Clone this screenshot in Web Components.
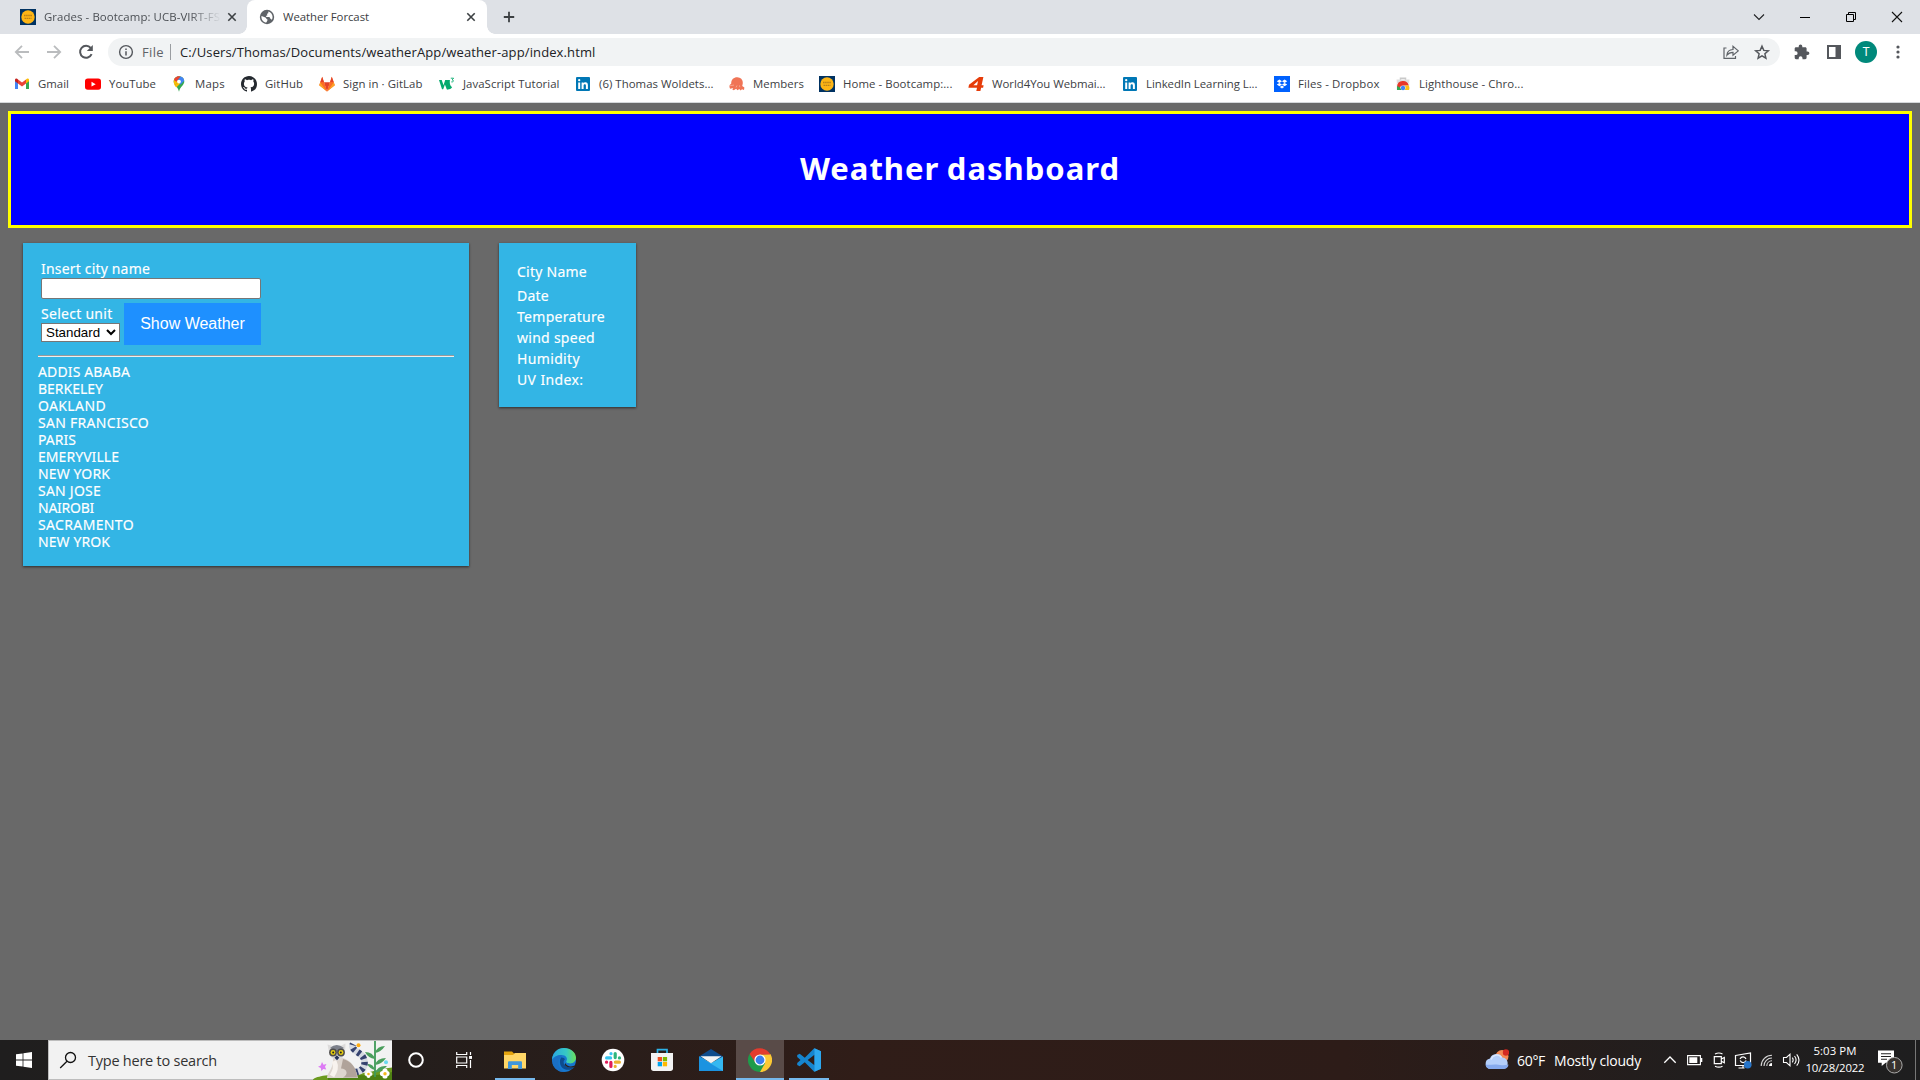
<!DOCTYPE html>
<html lang="en">
<head>
<meta charset="utf-8">
<title>Weather Forcast</title>
<style>
html,body{margin:0;height:100%;overflow:hidden;background:#696969}
body{font-family:"Open Sans","Noto Sans",sans-serif}
</style>
</head>
<body>
<desktop-screen></desktop-screen>
<script>
const define=(name,html,init)=>customElements.define(name,class extends HTMLElement{
  connectedCallback(){
    if(this.shadowRoot)return;
    const r=this.attachShadow({mode:'open'});
    r.innerHTML=typeof html==='function'?html(this):html;
    if(init)init(this,r);
  }
});

/* Text whose letter spacing is tuned so the run has the width in [w] */
define('fit-text','<style>:host{display:inline-block;white-space:pre;flex:none}</style><slot></slot>',el=>{
  const w=parseFloat(el.getAttribute('w'));
  if(!w)return;
  const n=el.textContent.length;
  const now=el.getBoundingClientRect().width;
  el.style.letterSpacing=((w-now)/n).toFixed(3)+'px';
});

const seal='<rect width="16" height="16" fill="#003262"/><circle cx="8" cy="8" r="6.700" fill="#fdb515"/><path d="M4 6.500h8M4.500 9.300h7" stroke="#b9821a" stroke-width="1.300" stroke-dasharray="1.600 .5"/>';
const linkedin='<rect x="1" y="1" width="14" height="14" rx="1" fill="#0077b5"/><path d="M3.200 6.400h2v6.600h-2zM6.600 6.400h1.900v.9c.9-1.400 4.400-1.600 4.400 1.700v4h-2V9.600c0-2-2.300-1.800-2.300 0V13h-2z" fill="#fff"/><circle cx="4.200" cy="4.200" r="1.150" fill="#fff"/>';
const ICONS={
seal:[16,seal],
globe:[16,'<circle cx="8" cy="8" r="7.200" fill="#5f6368"/><path d="M7.300 13.600c-2.800-.3-4.900-2.700-4.900-5.600l.1-1L5.800 8.300c1 .3 1.600.8 1.600 1.700 1.200 0 1.300.9.900 1.700zM9.300 2.500c2.500.6 4.300 2.900 4.300 5.500 0 1-.3 2-.8 2.800L11.200 9.600c0-1.200-.6-1.700-1.700-1.700H7.200c-.3-1.100.2-1.600 1.300-1.700-.8-.9-.6-1.700.8-1.900z" fill="#fff"/>'],
close:[16,'<path d="M4.300 4.300l7.400 7.400M11.700 4.300l-7.400 7.400" stroke="#3c4043" stroke-width="1.600"/>'],
plus:[16,'<path d="M8 2.800v10.400M2.800 8h10.400" stroke="#3c4043" stroke-width="1.800"/>'],
back:[18,'<path d="M16 9H3M9 2.800L2.800 9 9 15.200" fill="none" stroke="#babcbe" stroke-width="1.800"/>'],
fwd:[18,'<path d="M2 9h13M9 2.800L15.200 9 9 15.200" fill="none" stroke="#babcbe" stroke-width="1.800"/>'],
reload:[18,'<path d="M14.600 11.200A6 6 0 1 1 13.700 4.900" fill="none" stroke="#54575c" stroke-width="2"/><path d="M15.800 2v6h-6z" fill="#54575c"/>'],
info:[16,'<circle cx="8" cy="8" r="6.400" fill="none" stroke="#54575c" stroke-width="1.400"/><path d="M8 7.200v4.200M8 4.500v1.600" stroke="#54575c" stroke-width="1.500"/>'],
gmail:[16,'<path d="M1 4v9h3V6.500z" fill="#4285f4"/><path d="M12 6.500V13h3V4z" fill="#34a853"/><path d="M12 3.400V7.500l3-2.300V4c0-1.500-1.700-2.100-3-.6z" fill="#fbbc04"/><path d="M1 4v1.200l3 2.300V3.400C2.700 1.900 1 2.500 1 4z" fill="#c5221f"/><path d="M4 3.400l4 3.100 4-3.100v4.100l-4 3.100-4-3.100z" fill="#ea4335"/>'],
youtube:[16,'<rect y="2.500" width="16" height="11.300" rx="2.800" fill="#f00"/><path d="M6.500 5.700v4.900L10.700 8.150z" fill="#fff"/>'],
maps:[16,'<path d="M8 .3C4.900.3 2.700 2.700 2.700 5.600c0 3.500 4 5 5.300 10.100 1.300-5.100 5.300-6.600 5.300-10.100C13.300 2.700 11.100.3 8 .3z" fill="#34a853"/><path d="M3.700 9.500C3 8.300 2.700 7 2.700 5.600c0-1.300.4-2.500 1.200-3.400L7 4.500 7 6z" fill="#fbbc04"/><path d="M3.700 9.500L11 1.200 13 4 5.200 11.500z" fill="#fbbc04"/><path d="M3.900 2.200C5 .9 6.300.3 8 .3L9.600.6 5.400 5.800 2.900 4z" fill="#ea4335"/><path d="M9.600.6C11.700 1.100 13 2.600 13.200 4.700L9.500 8.500 6.300 4.700z" fill="#4285f4"/><circle cx="8" cy="5.600" r="1.900" fill="#fff"/>'],
github:[16,'<path fill="#24292f" d="M8 0C3.580 0 0 3.580 0 8c0 3.540 2.290 6.530 5.470 7.590.4.070.55-.17.55-.38 0-.19-.01-.82-.01-1.490-2.010.37-2.530-.49-2.690-.94-.09-.23-.48-.94-.82-1.130-.28-.15-.68-.52-.01-.53.63-.01 1.080.58 1.230.82.72 1.210 1.870.87 2.330.66.07-.52.28-.87.51-1.070-1.780-.2-3.640-.89-3.640-3.950 0-.87.31-1.590.82-2.150-.08-.2-.36-1.020.08-2.120 0 0 .67-.21 2.200.82.64-.18 1.320-.27 2-.27s1.360.09 2 .27c1.530-1.040 2.200-.82 2.200-.82.44 1.100.16 1.920.08 2.120.51.56.82 1.270.82 2.150 0 3.070-1.870 3.750-3.650 3.950.29.25.54.73.54 1.480 0 1.070-.01 1.930-.01 2.200 0 .21.15.46.55.38A8.010 8.010 0 0 0 16 8c0-4.420-3.580-8-8-8z"/>'],
gitlab:[16,'<path d="M3.200.8L.2 9.200 8 15.500z" fill="#fc6d26"/><path d="M12.800.8l3 8.400L8 15.500z" fill="#fc6d26"/><path d="M3.200.8L5 6.300H1.300zM12.800.8L11 6.300h3.700z" fill="#e24329"/><path d="M5 6.300h6L8 15.500z" fill="#e24329"/><path d="M1.300 6.300L.2 9.200 8 15.500zM14.700 6.300l1.100 2.900L8 15.500z" fill="#fca326"/><path d="M1.300 6.300H5L8 15.500zM14.700 6.300H11L8 15.500z" fill="#fc6d26"/>'],
w3:[16,'<path d="M0 4h2.700l1.800 5.200L6.200 4h2.600l1 3L8.900 13.200H7.800L5.900 8.500 4.200 13.200H3z" fill="#04aa6d"/><path d="M8.800 4h2.100c-.3 2.500-.3 5.500 2.200 7.200-1.200 2-4 2.600-5.300 2z" fill="#04aa6d"/><path d="M11.800 2.200h2.800l-1.400 1.700c1.800 0 1.600 2.600-.9 2" fill="none" stroke="#04aa6d" stroke-width=".9"/>'],
linkedin:[16,linkedin],
members:[16,'<path d="M2.200 7.800C2 3.600 4.800 1.200 8.300 1.300c3.700.1 6 3 5.400 6.600l-.5 2 2.200 1.600-.4 2.400-2-.7-1.400 1.300-1.300-1.400-1.800 1.200-1.400-1.500-2.300 1.500-1.500-.9 1-1.500-3.200.9C-.2 10.500.6 8.400 2.200 7.800z" fill="#f07456"/><path d="M1 9.700l4-.6M7 11.500l1-2M10.800 11.200l-.3-1.800" stroke="#f9b09b" stroke-width=".8"/>'],
four:[16,'<path d="M11.200.9h4.200l-1.800 8.300H15.600l-.5 2.500h-2l-.7 3.300H8.300l.7-3.300H.4l.6-2.900zM10 5L5.400 9.200h3.700z" fill="#e63c0a" fill-rule="evenodd"/>'],
dropbox:[16,'<rect width="16" height="16" fill="#0061fe"/><path d="M5.400 3.500L2.800 5.200l2.600 1.700L8 5.200zM10.600 3.500L8 5.200l2.600 1.700 2.600-1.700zM5.400 6.900L2.800 8.600l2.600 1.700L8 8.600zM10.600 6.900L8 8.600l2.600 1.700 2.600-1.700zM8 9.600l-2.200 1.500L8 12.600l2.200-1.500z" fill="#fff"/>'],
store2:[16,'<path d="M5.500 4V2.200h5V4" fill="none" stroke="#c9c9c9" stroke-width="1.500"/><path d="M1.500 3.600h13L14 8H2z" fill="#dedede"/><path d="M1.500 7h13v7h-13z" fill="#f1f1f1"/><path d="M2 10.500A6 6 0 0 1 13.800 9.500H8a3 3 0 0 0-3 3z" fill="#e8372a"/><path d="M2 10L5 11.500 6.500 14H2z" fill="#34a853"/><path d="M10 9.500h3.800a6 6 0 0 1 .2 4.500H9.500a3 3 0 0 0 .5-4z" fill="#fbc116"/><circle cx="8" cy="12" r="2.200" fill="#4285f4"/>'],
chev:[16,'<path d="M3 5.500l5 5 5-5" fill="none" stroke="#202124" stroke-width="1.100"/>'],
min:[16,'<path d="M3 8.500h10" stroke="#000" stroke-width="1"/>'],
restore:[16,'<path d="M3.500 5.500h7v7h-7zM5.500 5.500v-2h7v7h-2" fill="none" stroke="#000" stroke-width="1"/>'],
wclose:[16,'<path d="M3 3l10 10M13 3L3 13" stroke="#111" stroke-width="1.100"/>'],
share:[16,'<path d="M3.500 4H1v10.400h11.500V12" fill="none" stroke="#5f6368" stroke-width="1.200"/><path d="M3.900 11.200C4.200 7.300 6.500 5.600 10 5.500V2.300l5.300 4.600L10 11.300V8.300C7.300 8.300 5.500 9 3.900 11.200z" fill="none" stroke="#5f6368" stroke-width="1.200"/>'],
star:[18,'<path d="M9 3.200l1.800 4.200 4.500.4-3.400 3 1 4.400L9 12.900l-3.900 2.300 1-4.400-3.400-3 4.500-.4z" fill="none" stroke="#54575c" stroke-width="1.500"/>'],
puzzle:[16,'<path d="M13.600 7.400h-1V4.600c0-.8-.6-1.400-1.400-1.400H8.300v-1a1.800 1.800 0 0 0-3.600 0v1H2C1.200 3.200.7 3.800.7 4.600v2.700h1a1.900 1.900 0 0 1 0 3.800h-1v2.700c0 .8.6 1.400 1.300 1.400h2.700v-1a1.900 1.900 0 0 1 3.800 0v1h2.700c.8 0 1.400-.6 1.400-1.400V11h1a1.800 1.800 0 0 0 0-3.600z" fill="#54575c"/>'],
panel:[16,'<path d="M2 2h12v12H2z" fill="#fff" stroke="#54575c" stroke-width="2"/><path d="M9.500 2H14v12H9.500z" fill="#54575c"/>'],
dots:[16,'<g fill="#54575c"><circle cx="8" cy="3" r="1.600"/><circle cx="8" cy="8" r="1.600"/><circle cx="8" cy="13" r="1.600"/></g>'],
win:[16,'<path d="M0 2.300L6.600 1.400V7.600H0zM7.400 1.300L16 .1v7.500H7.400zM0 8.400h6.600v6.200L0 13.700zM7.400 8.400H16v7.500l-8.600-1.200z" fill="#fff"/>'],
find:[18,'<circle cx="11.500" cy="6.500" r="5" fill="none" stroke="#111" stroke-width="1.300"/><path d="M8 10.300L1.200 17" stroke="#111" stroke-width="1.300"/>'],
cortana:[18,'<circle cx="9" cy="9" r="6.800" fill="none" stroke="#fff" stroke-width="2"/>'],
tview:[18,'<path d="M1.700 1v2.500h10V1M1.700 17v-2.500h10V17M1.700 6h10v6h-10zM15.500 1v3M15.500 9v8" fill="none" stroke="#fff" stroke-width="1.200"/><path d="M14.100 5h2.900v2.900h-2.900z" fill="#fff"/>'],
folder:[24,'<path d="M1 3.500h8l2 2h11V20H1z" fill="#e5a50f"/><path d="M1 7h9l2-2h11v15.500H1z" fill="#ffd767"/><path d="M5 21v-6.500c0-.8.5-1.300 1.300-1.300h11.400c.8 0 1.300.5 1.300 1.300V21h-3.800v-4H8.800v4z" fill="#3f97dc"/>'],
edge:[24,'<defs><linearGradient id="g1" x1="0" x2="1"><stop offset="0" stop-color="#2aa6e0"/><stop offset=".6" stop-color="#36c9c4"/><stop offset="1" stop-color="#6be05a"/></linearGradient></defs><circle cx="12" cy="12" r="12" fill="#1678cf"/><path d="M0 11.500C.6 4.800 5.500 0 12 0c7 0 12 4.600 12 9.800 0 3.500-2.600 5.600-5.800 5.600-2.900 0-4.600-1.100-3.800-2.400 1.800-3-1-6-4.600-6C5 7 1.500 8.800 0 11.500z" fill="url(#g1)"/><path d="M9.500 9C5 11 5 21 13 23.900 8 24.500 2.500 21.500.7 16 0 10 5 7 9.800 7z" fill="#1a6fc4"/><path d="M9.300 9.500c-3 3.800-1 11.200 5 12.200 3.200.5 6.300-.4 8.400-3-3.200 1.500-7.700 1.200-10-1.600-1.700-2.200-1.300-4.500.2-5.800-.5-1.200-1.900-2-3.600-1.800z" fill="#0d4b8f"/><path d="M12.700 17.100c2.300 2.800 6.800 3.100 10 1.600.6-.5 1-1 .5-1.100-4.100 1.500-8.700 1-9.800-2.600z" fill="#2c211f"/>'],
slack:[24,'<circle cx="12" cy="12" r="11.300" fill="#fff"/><g stroke-width="3.200" stroke-linecap="round"><path d="M5.600 9.900h4M10 5.600v.1" stroke="#36c5f0"/><path d="M14.200 5.600v4M18.500 9.900h-.1" stroke="#2eb67d"/><path d="M18.400 14.200h-4M14.200 18.500v-.1" stroke="#ecb22e"/><path d="M9.900 18.400v-4M5.500 14.200h.1" stroke="#e01e5a"/></g>'],
store:[24,'<path d="M7.500 6V1.700h9.500V6" fill="none" stroke="#2db3e8" stroke-width="1.700"/><path d="M1 5h22v15.500c0 1.600-1 2.500-2.500 2.500h-17C2 23 1 22 1 20.500z" fill="#f3f3f3"/><path d="M7.700 9h4.300v4.300H7.700z" fill="#f25022"/><path d="M12.800 9h4.300v4.300h-4.300z" fill="#7fba00"/><path d="M7.700 14h4.300v4.300H7.700z" fill="#00a4ef"/><path d="M12.800 14h4.300v4.300h-4.300z" fill="#ffb900"/>'],
mail:[24,'<path d="M0 8.500L12 1l12 7.500V12H0z" fill="#0f4c8c"/><path d="M0 8.500L12 15l12-6.500V23H0z" fill="#35b8f1"/><path d="M0 8.500L24 23H0z" fill="#1b93e0"/><path d="M1.500 8.300h21L12 15.200z" fill="#f4f4f4"/>'],
chrome:[24,'<path d="M22.400 6A12 12 0 0 1 12 24L6 12 12 6.500z" fill="#fcc934"/><path d="M1.600 6A12 12 0 0 0 12 24l5.200-9-5.200-3z" fill="#1e9b4b"/><path d="M1.600 6A12 12 0 0 1 22.400 6.500H12L7 14z" fill="#e33b2e"/><circle cx="12" cy="12" r="5.600" fill="#fff"/><circle cx="12" cy="12" r="4.400" fill="#3b7ded"/>'],
vscode:[24,'<path d="M17.200.3L24 3.200v17.600l-6.800 2.900L7.800 14.300 2.700 18.200.2 17V15L3.500 12 .2 9V7l2.500-1.200 5.100 3.900zM17.500 6.800L10.700 12l6.800 5.200z" fill="#1685cf" fill-rule="evenodd"/><path d="M17.500.3L24 3.200v17.600l-6.500 2.900z" fill="#2da8ef"/>'],
weather:[24,'<circle cx="17" cy="8.500" r="6.500" fill="#f58a55"/><circle cx="21" cy="4.500" r="3.200" fill="#d32a22"/><path d="M5.500 21a5.300 5.300 0 0 1-.5-10.500A7 7 0 0 1 17.500 9.500 5.900 5.900 0 0 1 18.500 21z" fill="#b4cffb"/><path d="M5.500 21a5.300 5.300 0 0 1-5-4.500c4 1 7-.5 11 0s7 1.500 12 0c-.3 2.800-2 4.500-5 4.500z" fill="#86aaee"/><path d="M6 11.500c2-5 8-6 10.500-2" fill="none" stroke="#dbe8fd" stroke-width="1.500"/>'],
up:[16,'<path d="M2.300 10.700L8 5l5.700 5.700" fill="none" stroke="#fff" stroke-width="1.300"/>'],
batt:[16,'<path d="M.6 3.600h12.800v9H.6z" fill="none" stroke="#fff" stroke-width="1.100"/><path d="M2.300 5.300h8v5.600h-8zM14 6h1.300v4H14z" fill="#fff"/>'],
cam:[16,'<path d="M3.300 4.600h7v7h-7zM10.300 7l3-1.500v5.300l-3-1.600M4 2q4-2 7.500 0M4 14.200q4 2 7.500 0" fill="none" stroke="#fff" stroke-width="1.200"/>'],
sync:[18,'<path d="M1.500 4.500l15-2.500v12.500h-15zM9 15v2M4.500 17h6" fill="none" stroke="#fff" stroke-width="1.200"/><path d="M6 8c1.500-3 5-2.500 6 0M12.200 9.500c-1.500 3-5 2.500-6 0" fill="none" stroke="#fff" stroke-width="1.200"/><circle cx="13.700" cy="13.700" r="3.800" fill="#2775c9"/>'],
wifi:[16,'<path d="M2.200 14C2.200 8 7 3.200 13 3.200M5 14c0-4.500 3.500-8 8-8M7.800 14c0-3 2.300-5.200 5.200-5.200" fill="none" stroke="#d8d8d8" stroke-width="1.100"/><path d="M10 14c0-1.900 1.200-3 3-3v3z" fill="#fff"/>'],
vol:[18,'<path d="M1.500 6.500h3L8 3.200v11.600l-3.500-3.300h-3zM10.300 6.700q1.700 2.300 0 4.600M12.500 5q3.200 4 0 8M14.700 3.300q4.600 5.700 0 11.400" fill="none" stroke="#fff" stroke-width="1.100"/>'],
notif:[28,'<path d="M1 2.500h16v12.200H8.600L4.700 18v-3.300H1z" fill="#fff"/><path d="M4 5.700h10M4 8.500h10M4 11.300h6" stroke="#222" stroke-width="1.100"/><circle cx="17.300" cy="17.200" r="7.800" fill="#37322f" stroke="#aaa" stroke-width="1"/>'],
lemur:[0,'<path d="M0 39c0-3 14-6 32-5.500 18 .6 32-5 47-7V39z" fill="#6b9a1f"/><path d="M15 35c20-4 40 3 64-4v8H15z" fill="#4d8012"/><path d="M62 36V0" stroke="#3f9a58" stroke-width="1.800"/><path d="M62 29q-5-1-8-6 6-1 8 6zM62 24q7-1 11-7-9 0-11 7zM62 18q-7-1-10-7 8 0 10 7zM62 12q6-1 10-7-8 0-10 7zM62 32q8-2 12-7-9-1-12 7z" fill="#4a9e5c"/><path d="M42 31c8 0 12-8 8-15-3-5-13-7-10-13" fill="none" stroke="#d5d9e1" stroke-width="6.500"/><path d="M42 31c8 0 12-8 8-15-3-5-13-7-10-13" fill="none" stroke="#35426f" stroke-width="6.500" stroke-dasharray="3 3.200"/><path d="M20 17c9-3 22 2 25 20H14c0-6 7-9 6-20z" fill="#ddd5ce"/><path d="M30 18c8 2 14 9 14 18.500H30c6-3 4-9-2-9z" fill="#b0a39a"/><path d="M21 20c3 6 1 10-2 15" fill="none" stroke="#f8f3ee" stroke-width="5"/><path d="M14.500 3.500l5 1.500h8l5-2.500-.3 6.500-2.200 7-5.500 4-6.500-4-2.200-6z" fill="#dcdbdb"/><path d="M17 7q6.500-6 14 0L24.300 11z" fill="#7c808b"/><circle cx="20" cy="11.500" r="3.900" fill="#4d4c4b"/><circle cx="28" cy="11.500" r="3.900" fill="#4d4c4b"/><circle cx="20" cy="11.500" r="2.400" fill="#e8cf10"/><circle cx="28" cy="11.500" r="2.400" fill="#e8cf10"/><circle cx="20.200" cy="11.500" r="1" fill="#222"/><circle cx="27.800" cy="11.500" r="1" fill="#222"/><path d="M21.500 16.700l2.300-2.500 2.500 2.500-2.300 2.500z" fill="#26345a"/><path d="M9 21l1.500 2.700 3-.7-1.500 2.800 1.300 2.700-3-.6-2 2-.5-3-2.800-1.200 2.700-1.300z" fill="#dd7bf5"/><circle cx="45.500" cy="4.300" r="2" fill="#ffac12"/><circle cx="73" cy="21.300" r="2" fill="#6bd8ee"/><g fill="#fff"><circle cx="53.500" cy="33" r="2"/><circle cx="57.500" cy="33" r="2"/><circle cx="55.500" cy="30.800" r="2"/><circle cx="55.500" cy="35" r="2"/><circle cx="69.500" cy="32.500" r="2.600"/><circle cx="74" cy="32.500" r="2.600"/><circle cx="72" cy="30" r="2.600"/><circle cx="72" cy="35" r="2.600"/></g><circle cx="55.500" cy="33" r="1.300" fill="#f4b81e"/><circle cx="72" cy="32.700" r="1.700" fill="#f4b81e"/>']
};

define('ui-icon',el=>{
  const [s,body]=ICONS[el.getAttribute('name')];
  const w=s||79,h=s||39;
  return `<style>:host{display:block;flex:none;width:${w}px;height:${h}px}svg{display:block;width:100%;height:100%}</style><svg viewBox="0 0 ${w} ${h}">${body}</svg>`;
});

/* Fixed-width cell that centres its content */
define('icon-cell',el=>`<style>:host{display:flex;flex:none;align-items:center;justify-content:center;width:${el.getAttribute('w')}px;height:100%}</style><slot></slot>`);

define('browser-tab',el=>{
  const on=el.hasAttribute('active');
  return `<style>
  :host{display:flex;flex:none;align-items:center;box-sizing:border-box;height:34px;font-size:11.400px;color:${on?'#3c4043':'#4b4f54'};
  ${on?'position:relative;width:240px;padding:0 8px 0 12px;background:#fff;border-radius:8px 8px 0 0':'width:247px;padding:0 7px 0 20px'}}
  .t{flex:1;margin:-2px 0 0 8px;overflow:hidden;white-space:nowrap;${on?'':'-webkit-mask:linear-gradient(90deg,#000 145px,transparent 177px)'}}
  ${on?`:host::before,:host::after{content:"";position:absolute;bottom:0;width:8px;height:8px}
  :host::before{left:-8px;background:radial-gradient(circle at 0 0,transparent 7.500px,#fff 8px)}
  :host::after{right:-8px;background:radial-gradient(circle at 100% 0,transparent 7.500px,#fff 8px)}`:''}
  </style><ui-icon name="${el.getAttribute('icon')}"></ui-icon><div class="t"><slot></slot></div><ui-icon name="close"></ui-icon>`;
});

define('book-mark',el=>`<style>:host{display:flex;flex:none;align-items:center;gap:8px;width:${el.getAttribute('w')}px;font-size:11.400px;color:#3c4043}::slotted(fit-text){margin-top:-2px}</style>
<ui-icon name="${el.getAttribute('icon')}"></ui-icon><slot></slot>`);

define('browser-chrome',()=>`<style>
:host{display:flex;flex-direction:column;height:103px;background:#fff;box-sizing:border-box;border-bottom:1px solid #d5d8db}
.tabs{display:flex;align-items:center;height:34px;background:#dee1e6}
.sp{flex:1}
.bar{display:flex;align-items:center;height:36px;padding:0 6px}
.omni{display:flex;align-items:center;flex:none;width:1672px;height:28px;box-sizing:border-box;padding:0 2px 0 10px;margin-left:6px;border-radius:14px;background:#f1f3f4;font-size:13px;color:#202124}
.file{color:#5f6368;margin-left:8px}
.sep{width:1px;height:16px;background:#9a9da1;margin:0 9px 0 6px}
.av{width:22px;height:22px;border-radius:50%;background:#00897b;color:#fff;font:12px Roboto,sans-serif;display:flex;align-items:center;justify-content:center}
.marks{display:flex;align-items:center;height:28px;padding-left:14px}
</style>
<div class="tabs">
<browser-tab icon="seal"><fit-text w="182">Grades - Bootcamp: UCB-VIRT-FSF</fit-text></browser-tab>
<browser-tab active icon="globe"><fit-text w="86">Weather Forcast</fit-text></browser-tab>
<icon-cell w="44"><ui-icon name="plus"></ui-icon></icon-cell><div class="sp"></div>
<icon-cell w="46"><ui-icon name="chev"></ui-icon></icon-cell><icon-cell w="46"><ui-icon name="min"></ui-icon></icon-cell><icon-cell w="46"><ui-icon name="restore"></ui-icon></icon-cell><icon-cell w="46"><ui-icon name="wclose"></ui-icon></icon-cell>
</div>
<div class="bar">
<icon-cell w="32"><ui-icon name="back"></ui-icon></icon-cell><icon-cell w="32"><ui-icon name="fwd"></ui-icon></icon-cell><icon-cell w="32"><ui-icon name="reload"></ui-icon></icon-cell>
<div class="omni"><ui-icon name="info"></ui-icon><fit-text class="file" w="22">File</fit-text><div class="sep"></div><fit-text w="415.500">C:/Users/Thomas/Documents/weatherApp/weather-app/index.html</fit-text><div class="sp"></div>
<icon-cell w="31"><ui-icon name="share"></ui-icon></icon-cell><icon-cell w="32"><ui-icon name="star"></ui-icon></icon-cell></div>
<div class="sp"></div>
<icon-cell w="32"><ui-icon name="puzzle"></ui-icon></icon-cell><icon-cell w="32"><ui-icon name="panel"></ui-icon></icon-cell><icon-cell w="32"><div class="av">T</div></icon-cell><icon-cell w="32"><ui-icon name="dots"></ui-icon></icon-cell>
</div>
<div class="marks">${[['gmail','Gmail',31,71],['youtube','YouTube',47,86],['maps','Maps',30,70],['github','GitHub',38,78],['gitlab','Sign in · GitLab',79.5,120],['w3','JavaScript Tutorial',96.5,136],['linkedin','(6) Thomas Woldets...',114.5,154],['members','Members',51,90],['seal','Home - Bootcamp:...',109.5,149],['four','World4You Webmai...',113.5,154],['linkedin','LinkedIn Learning L...',111.5,152],['dropbox','Files - Dropbox',81.5,121],['store2','Lighthouse - Chro...',104.5,150]].map(([i,t,w,p])=>`<book-mark icon="${i}" w="${p}"><fit-text w="${w}">${t}</fit-text></book-mark>`).join('')}</div>`);

define('page-banner',`<style>:host{display:flex;justify-content:center;box-sizing:border-box;height:117px;margin:8px 8px 0;border:3px solid #ff0;background:#00f;color:#fff}
h1{margin:32px 0 0;font:bold 31px/44px "Noto Sans",sans-serif;word-spacing:-1.500px}</style><h1><slot></slot></h1>`);

define('info-card',`<style>:host{display:block;flex:none;box-sizing:border-box;background:#33b5e5;color:#fff;box-shadow:0 1px 3px rgba(0,0,0,.22),0 1px 2px rgba(0,0,0,.4);font:14px/17px "Noto Sans",sans-serif;-webkit-text-stroke:.15px #fff}</style><slot></slot>`);

define('city-search',()=>`<style>
:host{display:block}
.form{display:grid;grid-template-columns:79px 137px;gap:0 4px;padding-left:3px}
.name{grid-column:1/3}
.lb{height:17px}
input{display:block;box-sizing:border-box;width:220px;height:21px;margin:1px 0 4px;padding:0;border:1px solid #767676;border-radius:2px;background:#fff}
.unit{padding-top:2px}
.unit .lb{height:18px}
select{display:block;box-sizing:border-box;width:79px;height:19px;margin:0;padding:0;border:1px solid #767676;border-radius:0;background:#fff;color:#000;font:13.333px Arial,"Liberation Sans",sans-serif}
select,button{-webkit-text-stroke:0}
button{width:137px;height:42px;padding:0;border:0;background:#1e90ff;color:#fff;font:16px Arial,"Liberation Sans",sans-serif}
hr{margin:10px 0 6px;border:0;height:1px;border-top:1px solid #9a9a9a;background:#eee}
</style>
<div class="form"><div class="name"><div class="lb"><fit-text w="109">Insert city name</fit-text></div><input></div>
<div class="unit"><div class="lb"><fit-text w="71.500">Select unit</fit-text></div><select><option>Standard</option></select></div>
<button>Show Weather</button></div><hr>
${[['ADDIS ABABA',92],['BERKELEY',65],['OAKLAND',68],['SAN FRANCISCO',111],['PARIS',38],['EMERYVILLE',81],['NEW YORK',72],['SAN JOSE',63],['NAIROBI',56],['SACRAMENTO',96],['NEW YROK',72]].map(([t,w])=>`<div class="lb"><fit-text w="${w}">${t}</fit-text></div>`).join('')}`);

define('weather-page',()=>`<style>:host{display:block;flex:1;background:#696969}
.row{display:flex;align-items:flex-start;gap:30px;padding:15px 23px}
.a{width:446px;height:323px;padding:17px 15px}
.b{width:137px;height:164px;padding:20px 18px}
.l{height:21px}.l:first-child{height:24px}
</style>
<page-banner><fit-text w="320">Weather dashboard</fit-text></page-banner>
<div class="row"><info-card class="a"><city-search></city-search></info-card>
<info-card class="b">${[['City Name',70],['Date',32],['Temperature',88],['wind speed',78],['Humidity',63],['UV Index:',66.5]].map(([t,w])=>`<div class="l"><fit-text w="${w}">${t}</fit-text></div>`).join('')}</info-card></div>`);

define('task-button',el=>`<style>:host{display:flex;flex:none;align-items:center;justify-content:center;position:relative;height:40px;width:${el.getAttribute('w')}px;${el.hasAttribute('active')?'background:#594b48;':''}}
i{position:absolute;bottom:0;height:2px;background:#76b9ed;left:${el.hasAttribute('active')?0:4}px;right:${el.hasAttribute('active')?0:4}px}</style>
<ui-icon name="${el.getAttribute('icon')}"></ui-icon>${el.hasAttribute('open')?'<i></i>':''}`);

define('task-bar',`<style>
:host{display:flex;align-items:center;height:40px;flex:none;background:linear-gradient(90deg,#1f1e1e,#241e1c 21%,#301d18 45%,#2d1c18 70%,#211e1e 88%,#1e1e1f);color:#fff}
.search{display:flex;align-items:center;box-sizing:border-box;width:344px;height:40px;padding-left:10px;background:#f2f2f2;border:1px solid #bdbdbd;border-right:0;color:#333;font-size:14.500px}
.search fit-text{margin-left:11px}
.sp{flex:1}
.w{font-size:14px}
.clock{display:flex;flex-direction:column;align-items:center;width:70px;margin:-2px 0 0 -7px;font-size:11.400px;line-height:17px}
.n{position:relative;width:28px;height:28px;margin:4px 0 0 7px}
.n span{position:absolute;left:14px;top:9px;font-size:11px;line-height:16px}
.edge{width:1px;height:40px;background:#777;margin:0 4px 0 10px}
</style>
<task-button icon="win" w="48"></task-button>
<div class="search"><ui-icon name="find"></ui-icon><fit-text w="129">Type here to search</fit-text><div class="sp"></div><ui-icon name="lemur"></ui-icon></div>
<task-button icon="cortana" w="48"></task-button><task-button icon="tview" w="47"></task-button><icon-cell w="4"></icon-cell>
<task-button icon="folder" w="48" open></task-button><icon-cell w="1"></icon-cell><task-button icon="edge" w="48"></task-button><task-button icon="slack" w="50"></task-button><task-button icon="store" w="48"></task-button><task-button icon="mail" w="50"></task-button>
<task-button icon="chrome" w="48" open active></task-button><icon-cell w="1"></icon-cell><task-button icon="vscode" w="48" open></task-button>
<div class="sp"></div>
<ui-icon name="weather"></ui-icon><fit-text class="w" style="margin-left:8px" w="28">60°F</fit-text><fit-text class="w" style="margin-left:9px" w="87">Mostly cloudy</fit-text>
<icon-cell w="20"></icon-cell><icon-cell w="18"><ui-icon name="up"></ui-icon></icon-cell><icon-cell w="32"><ui-icon name="batt"></ui-icon></icon-cell><icon-cell w="16"><ui-icon name="cam"></ui-icon></icon-cell><icon-cell w="32"><ui-icon name="sync"></ui-icon></icon-cell><icon-cell w="16"><ui-icon name="wifi"></ui-icon></icon-cell><icon-cell w="32"><ui-icon name="vol"></ui-icon></icon-cell>
<div class="clock"><fit-text w="43">5:03 PM</fit-text><fit-text w="59">10/28/2022</fit-text></div>
<div class="n"><ui-icon name="notif"></ui-icon><span>1</span></div><div class="edge"></div>`);

define('desktop-screen',`<style>:host{display:flex;flex-direction:column;width:1920px;height:1080px;overflow:hidden}browser-chrome{flex:none}</style>
<browser-chrome></browser-chrome><weather-page></weather-page><task-bar></task-bar>`);
</script>
</body>
</html>
